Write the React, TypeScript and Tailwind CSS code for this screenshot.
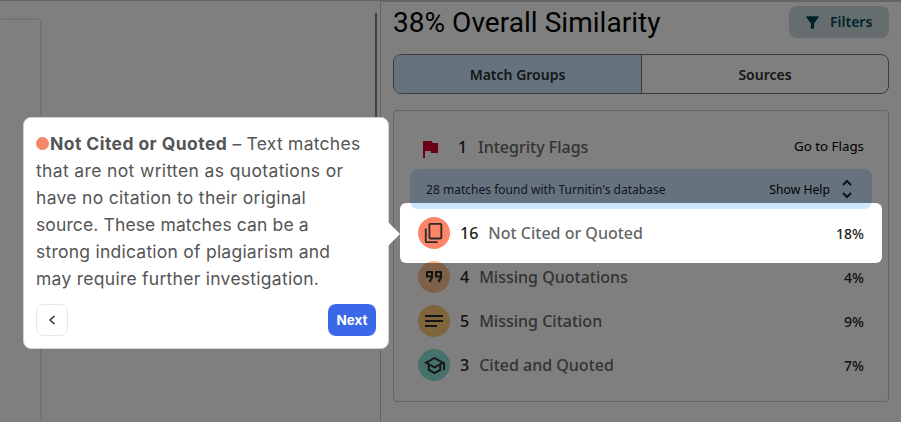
import React from "react";
import {
  MdFilterAlt,
  MdFlag,
  MdNotes,
  MdOutlineContentCopy,
  MdOutlineSchool,
} from "react-icons/md";

const QuoteIcon: React.FC = () => (
  <svg
    className="w-6 h-6"
    viewBox="0 0 24 24"
    fill="none"
    stroke="currentColor"
    strokeWidth="2.1"
    strokeLinejoin="round"
  >
    <path d="M10 11.500H5V7H10V12.600L7.500 17" />
    <path d="M19 11.500H14V7H19V12.600L16.500 17" />
  </svg>
);

const groups = [
  {
    count: 16,
    label: "Not Cited or Quoted",
    percent: "18%",
    color: "bg-[#ff8569]",
    icon: <MdOutlineContentCopy className="w-[22px] h-[22px] -scale-y-100" />,
  },
  {
    count: 4,
    label: "Missing Quotations",
    percent: "4%",
    color: "bg-[#ffc090]",
    icon: <QuoteIcon />,
  },
  {
    count: 5,
    label: "Missing Citation",
    percent: "9%",
    color: "bg-[#fcca78]",
    icon: <MdNotes className="w-6 h-6" />,
  },
  {
    count: 3,
    label: "Cited and Quoted",
    percent: "7%",
    color: "bg-[#8ee2d8]",
    icon: <MdOutlineSchool className="w-[23px] h-[23px]" />,
  },
];

const DocumentPane: React.FC = () => (
  <div className="w-[380px] shrink-0 border-t border-[#c8c8c8] flex justify-between">
    <div className="w-10 mt-[19px] bg-white shadow-[0_0_3px_rgba(0,0,0,0.3)]" />
    <div className="w-[2px] h-[200px] mt-3 mr-[3px] bg-[#808080]" />
  </div>
);

const SimilarityPanel: React.FC = () => (
  <div className="flex-1 border-l border-t-2 border-[#c8c8c8] pl-3 pr-3 pt-1">
    <div className="flex items-start justify-between">
      <h1 className="font-['Roboto',sans-serif] text-[28px] leading-8 pt-px -mb-px tracking-[0.04px] text-black whitespace-nowrap">
        38% Overall Similarity
      </h1>
      <button className="w-[100px] h-8 rounded-lg bg-[#ccdadd] text-[#004652] flex items-center pl-[14px] gap-[9px] text-sm font-semibold">
        <MdFilterAlt className="w-[19px] h-[19px]" />
        <span className="-ml-px">Filters</span>
      </button>
    </div>

    {/* Tabs */}
    <div className="mt-4 h-10 flex rounded-lg border border-[#777] overflow-hidden text-sm font-semibold text-[#2d2d2d]">
      <button className="w-[248px] bg-[#cce7ff] border-r border-[#777] pt-[2px]">
        Match Groups
      </button>
      <button className="flex-1 pt-[2px]">Sources</button>
    </div>

    {/* Match groups */}
    <div className="mt-4 h-[292px] rounded border border-[#c8c8c8] pt-[15px] px-4">
      <div className="h-[43px] flex items-center pl-2 pr-2">
        <MdFlag className="w-6 h-6 mt-[2px] text-[#d7002f]" />
        <span className="ml-4 w-5 pb-px text-base font-medium text-[#222]">
          1
        </span>
        <span className="pb-px font-medium text-base text-[#666]">
          Integrity Flags
        </span>
        <span className="ml-auto pb-[2px] text-[13.33px] text-black">
          Go to Flags
        </span>
      </div>
      <div className="h-10 rounded-lg bg-[#cce7ff] flex items-center pl-4 pr-[18px]">
        <span className="pt-[2px] text-[12px] tracking-[0.02px] text-[#222b3d]">
          28 matches found with Turnitin's database
        </span>
        <span className="ml-auto pt-[2px] text-[12.2px] text-black">
          Show Help
        </span>
        <svg
          className="ml-[10px] w-[14px] h-5"
          viewBox="0 0 14 20"
          fill="none"
          stroke="#222"
          strokeWidth="2"
        >
          <path d="M3 6l4-4 4 4M3 14l4 4 4-4" />
        </svg>
      </div>
      <div className="pt-[2px]">
        {groups.map((group) => (
          <div key={group.label} className="h-11 flex items-center px-2">
            <div
              className={`w-8 h-8 rounded-full flex items-center justify-center text-[#2b2b2b] ${group.color}`}
            >
              {group.icon}
            </div>
            <span className="ml-[10px] text-base font-medium text-[#222]">
              {group.count}
            </span>
            <span className="ml-[10px] text-base font-medium text-[#666]">
              {group.label}
            </span>
            <span className="ml-auto pt-[2px] text-sm font-medium text-[#222]">
              {group.percent}
            </span>
          </div>
        ))}
      </div>
    </div>
  </div>
);

const TourPopover: React.FC = () => (
  <div className="absolute left-[23px] top-[117px] w-[366px] h-[232px] rounded-lg bg-white border border-[#d0d0d0] px-3 pt-3">
    <div className="font-['Inter',sans-serif] text-[17.5px] leading-[27px] text-[#555] whitespace-nowrap">
      <div className="flex items-center">
        <span className="w-[13px] h-[13px] mr-px rounded-full bg-[#f4866a]" />
        <p className="tracking-[0.25px]">
          <strong className="tracking-[0.43px]">Not Cited or Quoted</strong> –
          Text matches
        </p>
      </div>
      <p className="tracking-[0.36px]">that are not written as quotations or</p>
      <p className="tracking-[0.3px]">have no citation to their original</p>
      <p className="tracking-[0.12px]">source. These matches can be a</p>
      <p className="tracking-[0.24px]">strong indication of plagiarism and</p>
      <p className="tracking-[0.27px]">may require further investigation.</p>
    </div>
    <div className="mt-3 flex justify-between">
      <button className="w-8 h-8 rounded-lg border border-[#e8e8e8] flex items-center justify-center">
        <svg
          className="w-3 h-3"
          viewBox="0 0 12 12"
          fill="none"
          stroke="#222"
          strokeWidth="1.4"
        >
          <path d="M8.500 2L4 6L8.500 10" />
        </svg>
      </button>
      <button className="w-12 h-8 rounded-lg bg-[#3b68e8] text-white font-['Inter',sans-serif] text-[13.5px] font-bold">
        Next
      </button>
    </div>
    <svg
      className="absolute left-[364px] top-[104px] w-3 h-6"
      viewBox="0 0 12 24"
    >
      <path d="M0 0L12 12L0 24Z" fill="#fff" />
    </svg>
  </div>
);

const App: React.FC = () => {
  return (
    <div className="relative w-[901px] h-[422px] overflow-hidden bg-white flex font-['Noto_Sans',sans-serif]">
      <DocumentPane />
      <SimilarityPanel />

      {/* Spotlight: the huge shadow dims everything around it */}
      <div className="absolute left-[400px] top-[203px] w-[482px] h-[60px] rounded-md shadow-[0_0_0_1000px_rgba(0,0,0,0.5)]" />
      <TourPopover />
    </div>
  );
};

export default App;
